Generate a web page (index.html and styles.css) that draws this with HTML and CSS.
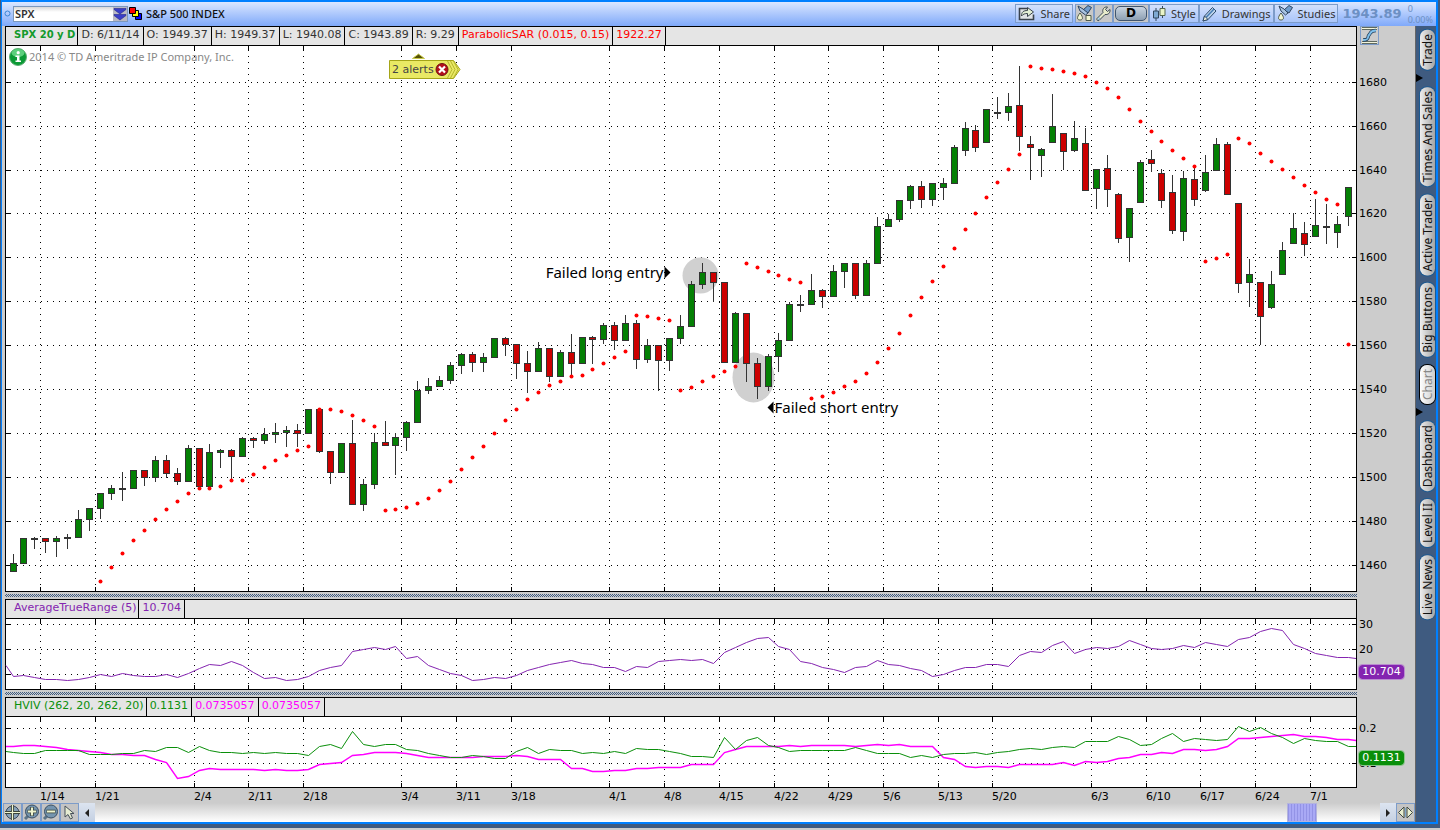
FILE: index.html
```html
<!DOCTYPE html>
<html lang="en">
<head>
<meta charset="utf-8">
<title>S&amp;P 500 INDEX</title>
<link rel="stylesheet" href="styles.css">
</head>
<body>
<div class="window">
  <header class="topbar">
    <svg class="dot" width="7" height="7"><circle cx="3.5" cy="3.5" r="2.5" fill="none" stroke="#3b86d6"/></svg>
    <div class="symbol">
      <input class="symbol-input" type="text" value="SPX" aria-label="Symbol">
      <button class="symbol-drop" aria-label="Symbol list">
        <svg width="14" height="14"><path d="M1 1.5h12v1L7 7 1 2.500zM1 7.500h12v1L7 13 1 8.500z" fill="#3a3fc8" stroke="#23288c" stroke-width=".6"/></svg>
      </button>
    </div>
    <svg class="link-icon" width="14" height="14"><path d="M6.500 6.500h6v6h-6z" fill="#00f" stroke="#000"/><path d="M3.500 3.500h6v6h-6z" fill="#ff0" stroke="#000"/><path d="M.5.5h6v6h-6z" fill="red" stroke="#000"/></svg>
    <h1 class="title">S&amp;P 500 INDEX</h1>
    <nav class="tools">
      <button class="tool share">
        <svg width="18" height="15"><path d="M9 2.500H1.500v11h14v-5" fill="#dfe3e6" stroke="#39424c" stroke-width="1.600"/><path d="M3.500 10c0-4 2-5.500 6-5.500V1.500l6 4.500-6 4.500V7.500C7 7.500 5 8 3.500 10z" fill="#e2efd4" stroke="#39424c"/></svg>
        Share
      </button>
      <button class="tool icon" aria-label="Edit studies">
        <svg width="17" height="17"><path d="M7 5l5-4.500 3.500 2L12 8z" fill="#6f9ccc" stroke="#2f4560"/><path d="M2 1l5 3 5 4-2.500 2L4 6z" fill="#a9c4e0" stroke="#2f4560"/><path d="M4 8c4 5 2.500 7 0 7s-4-2 0-7z" fill="#f2f6d0" stroke="#4f5a4a"/><path d="M10 10.500h5v5h-5z" fill="#f2f6d0" stroke="#4f5a4a"/></svg>
      </button>
      <button class="tool icon" aria-label="Settings">
        <svg width="17" height="17"><path d="M2 13.500L8 7.500C7 4.500 9 1.500 12.500 2L10.500 4.500l2 2 2.500-2c.5 3.500-2 5.500-5 5L4 15.500c-1.500.5-2.500-.5-2-2z" fill="#e9eccb" stroke="#3d4a55"/><circle cx="3.800" cy="13.700" r="1" fill="#fff" stroke="#4b87b6" stroke-width=".7"/></svg>
      </button>
      <button class="tool period"><span>D</span></button>
      <button class="tool style">
        <svg width="15" height="17"><path d="M4 3v13M10.500 1v12" stroke="#31465c"/><path d="M1.500 6h5v7h-5z" fill="#7ea9d3" stroke="#31465c"/><path d="M8 3.500h5v7H8z" fill="#eaf4c8" stroke="#58694f"/></svg>
        Style
      </button>
      <button class="tool drawings">
        <svg width="16" height="16"><path d="M1 15l1.500-5L10.500 1.500l3.500 3.500-8 8.500z" fill="#bcd3ea" stroke="#2d4a69"/><path d="M4 11.500l8-8.500" stroke="#477db5" stroke-width="1.500"/><path d="M1 15l1.500-5 3.500 3.500z" fill="#f4f4df" stroke="#2d4a69"/></svg>
        Drawings
      </button>
      <button class="tool studies">
        <svg width="17" height="17"><path d="M7 5l5-4.500 3.500 2L12 8z" fill="#6f9ccc" stroke="#2f4560"/><path d="M2 1l5 3 4 4-2.500 2L4 6z" fill="#a9c4e0" stroke="#2f4560"/><path d="M4 8c4 5 2.500 7 0 7s-4-2 0-7z" fill="#f2f6d0" stroke="#4f5a4a"/></svg>
        Studies
      </button>
    </nav>
    <strong class="last">1943.89</strong>
    <div class="change"><span>0</span><span>0.00%</span></div>
  </header>

  <div class="workspace">
    <main class="charts">
      <section class="panel main-panel">
        <div class="box">
          <div class="legend">
            <span class="cell name green"><b>SPX 20 y D</b></span><span class="cell">D: 6/11/14</span><span class="cell">O: 1949.37</span><span class="cell">H: 1949.37</span><span class="cell">L: 1940.08</span><span class="cell">C: 1943.89</span><span class="cell">R: 9.29</span><span class="cell red">ParabolicSAR (0.015, 0.15)</span><span class="cell red">1922.27</span>
          </div>
          <div class="plot">
            <svg class="canvas" id="price"></svg>
            <div class="credit">
              <svg width="18" height="18"><circle cx="9" cy="9" r="8.500" fill="#0b9a35" stroke="#5fae74"/><ellipse cx="9" cy="5" rx="6.500" ry="4" fill="#5ccf7c"/><circle cx="9.200" cy="4.700" r="1.600" fill="#fff"/><path d="M6.500 7.500h4v5H12V14H6.500v-1.500H8V9H6.500z" fill="#fff"/></svg>
              2014 © TD Ameritrade IP Company, Inc.
            </div>
            <button class="alerts">
              <svg class="alerts-bg" width="72" height="27"><path d="M23.500 5.500l6-4.500 6 4.500z" fill="#555208" stroke="#c9c94a"/><path d="M.5 7.500h64l6.500 9-6.500 9H.5z" fill="#e9e964" stroke="#a5a518"/><path d="M58.500 8l4.500 8.500-4.500 8.500M61.500 8l4.500 8.500-4.500 8.500M64.500 8l4.500 8.500-4.500 8.500" fill="none" stroke="#b5b52c"/><circle cx="53" cy="16.500" r="6" fill="#b5101c" stroke="#6d1212"/><path d="M50 13.500l6 6M56 13.500l-6 6" stroke="#fff" stroke-width="2.200"/></svg>
              <span class="alerts-text">2 alerts</span>
            </button>
          </div>
        </div>
        <div class="scale">
          <button class="fit" aria-label="Fit scale"><svg width="17" height="17"><path d="M1 1.500h15M1 15.500h15" stroke="#606a60" stroke-width="3"/><path d="M1 1.500h15M1 15.500h15" stroke="#f3f5dc"/><path d="M2 13c7 0 4-3 6-5s1-4.500 7-4.500" fill="none" stroke="#26415c" stroke-width="3.400"/><path d="M2 13c7 0 4-3 6-5s1-4.500 7-4.500" fill="none" stroke="#7fc0ec" stroke-width="1.800"/></svg></button>
          <svg class="ticks" id="price-scale"></svg>
        </div>
      </section>
      <div class="splitter"></div>
      <section class="panel">
        <div class="box">
          <div class="legend"><span class="cell name purple">AverageTrueRange (5)</span><span class="cell purple">10.704</span></div>
          <div class="plot"><svg class="canvas" id="atr"></svg></div>
        </div>
        <div class="scale"><svg class="ticks" id="atr-scale"></svg><output class="badge badge-purple">10.704</output></div>
      </section>
      <div class="splitter"></div>
      <section class="panel">
        <div class="box">
          <div class="legend"><span class="cell name green2">HVIV (262, 20, 262, 20)</span><span class="cell green2">0.1131</span><span class="cell magenta">0.0735057</span><span class="cell magenta">0.0735057</span></div>
          <div class="plot"><svg class="canvas" id="hviv"></svg></div>
        </div>
        <div class="scale"><svg class="ticks" id="hviv-scale"></svg><output class="badge badge-green">0.1131</output></div>
      </section>
      <svg class="dates" id="dates"></svg>
      <footer class="scrollrow">
        <button class="mini" aria-label="Pan"><svg width="17" height="17"><circle cx="8.500" cy="8.500" r="6.500" fill="#86a0b6" stroke="#3a4b5c"/><path d="M8.500 1v15M1 8.500h15" stroke="#3b443b" stroke-width="3"/><path d="M8.500 1v15M1 8.500h15" stroke="#eef5cf" stroke-width="1.200"/></svg></button>
        <button class="mini" aria-label="Zoom in"><svg width="17" height="17"><path d="M2 15l3-3" stroke="#5b7488" stroke-width="3"/><circle cx="9" cy="7.500" r="6.500" fill="#7494ae" stroke="#3a4f63"/><path d="M9 3v9M4.500 7.500h9" stroke="#3b443b" stroke-width="3.600"/><path d="M9 3.500v8M5 7.500h8" stroke="#eef5cf" stroke-width="2"/></svg></button>
        <button class="mini" aria-label="Zoom out"><svg width="17" height="17"><path d="M2 15l3-3" stroke="#5b7488" stroke-width="3"/><circle cx="9" cy="7.500" r="6.500" fill="#7494ae" stroke="#3a4f63"/><path d="M4.500 7.500h9" stroke="#3b443b" stroke-width="3.600"/><path d="M5 7.500h8" stroke="#eef5cf" stroke-width="2"/></svg></button>
        <button class="mini" aria-label="Pointer"><svg width="17" height="17"><path d="M4 2v11l3-2.500L9.500 15l2-1L9.500 9.500H13z" fill="#e6ecd2" stroke="#46505a"/></svg></button>
        <button class="arrow" aria-label="Scroll left"><svg width="6" height="8"><path d="M5 0v8L1 4z" fill="#222"/></svg></button>
        <div class="track"><div class="thumb"></div></div>
        <button class="arrow" aria-label="Scroll right"><svg width="6" height="8"><path d="M1 0v8l4-4z" fill="#222"/></svg></button>
        <button class="mini" aria-label="Expand"><svg width="17" height="17"><path d="M7 3v11L1.500 8.500zM10 3v11l5.500-5.500z" fill="#e9efd0" stroke="#3e4943"/><path d="M8.500 4v9" stroke="#7aa6c9"/></svg></button>
      </footer>
    </main>
    <aside class="tabs">
      <button class="tab">Trade</button>
      <svg class="mark" width="21" height="8"><path d="M0 0l7 4-7 4z"/></svg>
      <button class="tab">Times And Sales</button>
      <button class="tab">Active Trader</button>
      <button class="tab">Big Buttons</button>
      <button class="tab current">Chart</button>
      <svg class="mark" width="21" height="8"><path d="M0 0l7 4-7 4z"/></svg>
      <button class="tab">Dashboard</button>
      <button class="tab">Level II</button>
      <button class="tab">Live News</button>
    </aside>
  </div>
</div>
<script src="chart.js"></script>
</body>
</html>
```

FILE: styles.css
```css
* { box-sizing: border-box; }
body {
  margin: 0;
  background: #ccc;
  font: 11px/14px "DejaVu Sans", Verdana, sans-serif;
  color: #333;
}
button, input { font: inherit; color: inherit; margin: 0; padding: 0; border: 0; background: none; border-radius: 0; }
svg { display: block; flex: none; }

.window {
  display: flex;
  flex-direction: column;
  height: calc(100vh - 2px);
  min-height: 480px;
  border: solid #3f5b80;
  border-width: 0 2px 4px 1px;
  background: #ccc;
}

/* top bar */
.topbar {
  display: flex;
  align-items: center;
  height: 26px;
  padding: 0 3px 1px 2px;
  border: solid #0080ff;
  border-width: 2px 2px 0 1px;
  background: linear-gradient(#dbe7ff, #7fa9fa);
  font-family: "Noto Sans", "Open Sans", sans-serif;
  white-space: nowrap;
}
.symbol {
  display: flex;
  width: 115px;
  height: 16px;
  margin: 0 1px 0 2px;
  border: 1px solid #7b98bd;
  background: #fff;
}
.symbol-input { flex: 1; min-width: 0; padding-left: 1px; font-size: 11px; font-weight: 600; background: linear-gradient(#d8d8d8, #fff 5px); }
.symbol-drop { width: 14px; background: #b9b9c4; }
.title { margin: 0 auto 0 3px; font-size: 11px; font-weight: 500; color: #111; }
.tools { display: flex; }
.tool {
  display: flex;
  align-items: center;
  gap: 4px;
  height: 19px;
  padding: 0 2px;
  border: 1px solid #7d9cc9;
  background: rgba(220, 228, 245, .35);
  font-size: 11px;
}
.share { margin-right: 2px; }
.tool.icon { width: 19px; padding: 0; background: #c8c8c8; }
.period { padding: 0 1px; background: #c8c8c8; }
.period span {
  width: 32px;
  height: 15px;
  border: 1px solid #40556e;
  border-radius: 5px;
  background: linear-gradient(#c8d4e0, #8ea0b3);
  font: bold 12px/13px "DejaVu Sans", sans-serif;
  color: #000;
  text-align: center;
}
.last { margin-left: 4px; font: bold 13px/20px "DejaVu Sans", sans-serif; color: #6c90c4; }
.change { display: flex; flex-direction: column; margin-left: 6px; font-size: 9px; line-height: 11px; color: #6c90c4; }

/* layout */
.workspace { display: flex; flex: 1; min-height: 0; border: solid #0080ff; border-width: 0 2px 2px 1px; }
.charts { display: flex; flex: 1; flex-direction: column; min-width: 0; }
.panel { display: grid; flex: none; grid-template-columns: 1fr 58px; padding-left: 3px; }
.main-panel { flex: 1; min-height: 0; }
.box { display: flex; flex-direction: column; min-width: 0; border: 1px solid #000; }
.legend { display: flex; height: 19px; border-bottom: 1px solid #000; background: #e5e5e5; white-space: nowrap; overflow: hidden; }
.cell { padding: 0 3px; border-right: 1px solid #000; line-height: 15px; }
.cell.name { padding-left: 8px; padding-right: 2px; }
.name b { font-size: 10px; }
.green { color: #129a2c; }
.green2 { color: #0a8f0a; }
.red { color: #f00; }
.purple { color: #8424b0; }
.magenta { color: #f0f; }
.plot { position: relative; height: 70px; background: #fff; }
.main-panel .plot { flex: 1; height: auto; min-height: 0; }
.canvas { position: absolute; inset: 0; width: 100%; height: 100%; overflow: visible; }
.scale { position: relative; display: flex; flex-direction: column; }
.ticks { position: absolute; top: 20px; left: 0; width: 100%; height: calc(100% - 21px); overflow: visible; }
.fit { align-self: flex-start; width: 19px; height: 19px; margin-left: 3px; border: 1px solid #7d9cc9; }
.badge {
  position: absolute;
  left: 2px;
  width: 45px;
  height: 14px;
  border-radius: 3px;
  color: #fff;
  line-height: 14px;
  text-align: center;
}
.badge-purple { top: 66px; background: #8424b0; outline: 1px solid #b98ccf; }
.badge-green { top: 54px; background: #0a8f0a; outline: 1px solid #8cc48c; }
.splitter {
  height: 7px;
  flex: none;
  margin: 0 58px 0 3px;
  background: repeating-conic-gradient(#3f5b80 0 25%, #ccc 0 50%) 0 0 / 2px 2px content-box;
  padding: 2px 0;
}
.dates { width: 100%; height: 15px; }

/* overlays on the price plot */
.credit { position: absolute; top: 2px; left: 3px; display: flex; align-items: center; gap: 2px; color: #888; font-family: "Noto Sans", "Open Sans", sans-serif; white-space: nowrap; }
.alerts { position: absolute; top: 7px; left: 28.370%; width: 72px; height: 27px; }
.alerts-text { position: absolute; top: 10px; left: 3px; color: #444; }

/* chart drawing */
.grid { stroke: #000; stroke-dasharray: 1 5; shape-rendering: crispEdges; }
.tick { stroke: #000; shape-rendering: crispEdges; }
.wick { stroke: #333; shape-rendering: crispEdges; }
.body { stroke: #333; shape-rendering: crispEdges; }
.up { fill: #048004; }
.down { fill: #c00; }
.sar { fill: #f00; }
.halo { fill: #d0d0d0; }
.line { fill: none; }
.line-atr { stroke: #8424b0; }
.line-hv { stroke: #0a8f0a; }
.line-iv { stroke: #f0f; stroke-width: 1.400; }
.axis { fill: #000; font: 11px "DejaVu Sans", sans-serif; }
.note { fill: #000; font: 15px "Noto Sans", "Open Sans", sans-serif; }

/* bottom row */
.scrollrow { display: flex; height: 19px; flex: none; padding-left: 1px; }
.mini { flex: none; width: 19px; height: 19px; border: 1px solid #7d9cc9; background: #c4c4c4; }
.arrow { display: grid; flex: none; place-items: center; width: 16px; background: linear-gradient(#dce4f0, #c4d0e2); }
.track { display: flex; flex: 1; min-width: 0; background: linear-gradient(#ccc, #fff); }
.thumb { width: 30px; flex: none; margin-left: 92.800%; border: 1px solid #b4b4dc; background: repeating-linear-gradient(90deg, #9393e6 0 1px, #a9a9f5 1px 3px); }

/* side tabs */
.tabs {
  display: flex;
  flex-direction: column;
  flex: none;
  width: 21px;
  padding-top: 4px;
  gap: 8px;
  border-left: 1px solid #666;
  background: #3f5b80;
}
.tab {
  width: 15px;
  margin-left: 4px;
  padding: 4px 0;
  border-radius: 7px;
  background: linear-gradient(270deg, #eee, #a4a4a4);
  box-shadow: 0 0 0 1px #1b5a92;
  color: #111;
  font: 12px/15px "Noto Sans", "Open Sans", sans-serif;
  writing-mode: vertical-rl;
  transform: rotate(180deg);
  white-space: nowrap;
}
.tab.current { background: linear-gradient(270deg, #fff, #ccc); box-shadow: 0 0 0 1px #000; color: #888; }
.mark { margin: -4px 0 -3px; }
```

FILE: chart.js
```js
// Candles: direction, body top, body bottom, high, low (panel rows; 46 is the top row)
const candles = `
g563 572 554 572|g538 564 538 564|g538 540 537 549|r538 542 538 553|g538 542 536 557|g537 539 534 549|g519 538 510 538|g508 520 508 531|g493 509 493 519|g488 494 485 500
g488 490 472 501|g470 489 470 489|r470 478 470 486|g460 478 456 482|r460 474 455 478|r473 482 468 485|g448 482 445 482|r448 487 448 487|g452 487 444 487|g450 453 449 468
r450 457 449 479|g438 457 437 457|r438 441 437 448|g434 441 428 444|g432 435 423 443|g430 433 426 447|r430 434 424 447|g409 434 409 434|r409 452 409 453|r451 473 451 484
g443 473 443 473|r443 505 420 505|g484 505 479 511|g442 485 433 489|r442 446 421 446|g437 446 433 475|g422 438 421 451|g390 423 381 423|g386 391 378 394|g380 387 376 387
g365 381 362 384|g354 366 353 374|r354 363 352 372|g357 363 353 372|g338 358 338 358|r338 345 337 356|r344 364 344 379|r363 372 351 393|g348 372 342 372|r348 377 348 382
g352 377 350 377|r352 364 334 375|g337 364 337 364|r337 340 336 364|g325 340 323 344|r325 341 322 350|g323 341 315 341|r323 360 320 369|g345 360 339 363|r345 361 345 391
g338 361 338 371|g326 339 315 344|g284 327 281 327|g272 285 263 289|r272 283 272 302|r282 363 282 363|g313 363 312 363|r313 364 313 382|r363 387 358 399|g356 387 354 391
g340 357 333 372|g304 341 302 341|g304 306 295 312|g290 305 274 305|r290 297 289 308|g271 297 265 297|g263 272 263 288|r263 296 263 299|g263 296 260 296|g226 264 217 264
g219 227 214 227|g200 220 200 222|g186 201 185 209|r186 200 181 208|g183 200 183 206|g183 188 178 200|g147 184 145 184|g128 151 122 156|r130 148 125 152|g109 143 109 143
g112 114 97 119|g106 113 93 121|r105 137 66 151|r144 148 136 180|g149 156 148 177|g126 143 94 143|r133 152 133 170|g138 151 121 152|r143 191 128 191|g169 189 169 209
r168 190 155 207|r194 239 193 243|g208 238 208 262|g162 203 160 203|r159 164 150 172|r173 201 169 208|r192 231 175 234|g178 232 171 241|r179 200 166 206|g172 191 155 192
g144 171 138 171|r144 195 142 195|r203 284 203 293|g274 283 259 307|r282 317 282 345|g284 308 271 309|g250 275 242 275|g228 244 213 244|r233 245 222 256|g225 237 199 237
g226 228 204 244|g224 233 216 248|g187 217 187 226`.trim().split(/[|\n]/).map(s => [s[0], ...s.slice(1).split(' ').map(Number)]);

// Parabolic SAR, from the ninth candle on
const sar = [581,567,553,540,530,519,509,501,493,488,488,486,480,480,474,467,460,455,450,446,409,409,411,415,420,426,510,509,507,503,498,490,481,469,457,446,433,420,409,399,392,385,381,376,375,369,363,357,351,315,316,318,320,390,387,381,376,371,366,263,267,271,275,279,282,398,396,392,386,381,373,362,348,333,315,297,281,266,248,229,213,197,182,169,154,66,68,69,71,73,76,82,88,97,109,121,131,141,150,158,166,261,258,254,138,143,153,161,169,177,185,192,199,204,344];

// Study lines: left edge, one value per candle, right edge
const atr = [665,676,675,677,679,679,680,679,677,674,676,673,675,676,676,674,677,673,668,664,665,661,665,672,678,677,680,679,676,670,667,665,651,649,647,649,646,658,656,665,669,673,675,680,679,677,678,675,670,667,664,662,660,663,664,667,667,671,666,667,661,660,659,660,659,663,652,647,642,638,637,646,649,661,663,667,669,672,667,666,660,664,665,668,670,676,674,670,667,667,664,664,666,655,651,652,645,641,653,649,647,648,646,640,644,648,649,648,645,647,642,644,646,639,637,631,628,630,644,648,653,655,657,657,658];
const hv = [751,752,753,753,750,750,750,750,754,754,754,753,753,750,751,747,747,752,746,750,752,752,753,752,753,752,753,753,755,746,744,748,731,744,746,744,744,749,750,753,755,757,757,755,756,758,758,751,747,753,749,750,750,753,752,753,751,753,748,749,749,751,753,756,756,757,737,749,740,737,745,747,751,750,750,750,750,750,747,750,753,753,753,757,755,757,754,753,753,752,754,752,751,749,748,749,747,746,747,741,741,741,736,739,745,744,738,733,741,738,739,740,739,726,731,727,733,737,743,738,740,741,741,746,746];
const iv = [746,746,745,745,746,747,749,750,751,752,754,754,755,755,759,762,778,776,770,768,769,769,769,769,770,769,770,770,769,764,763,762,755,754,752,752,752,753,755,757,757,757,757,757,756,756,756,755,756,759,759,759,768,768,771,771,770,770,768,768,767,767,767,764,764,764,752,749,746,746,746,746,745,746,745,745,745,745,746,745,744,745,744,746,746,746,757,759,766,767,766,766,767,764,764,764,764,762,765,761,762,761,758,757,754,754,752,753,749,749,750,749,746,738,738,737,736,735,734,736,736,737,739,739,740];

const weeks = [[2.5,'1/14'],[7.5,'1/21'],[16.5,'2/4'],[21.5,'2/11'],[26.5,'2/18'],[35.5,'3/4'],[40.5,'3/11'],[45.5,'3/18'],[54.5,'4/1'],[59.5,'4/8'],[64.5,'4/15'],[69.5,'4/22'],[74.5,'4/29'],[79.5,'5/6'],[84.5,'5/13'],[89.5,'5/20'],[98.5,'6/3'],[103.5,'6/10'],[108.5,'6/17'],[113.5,'6/24'],[118.5,'7/1']];

const byId = id => document.getElementById(id);
const line = (c, x1, y1, x2, y2) => `<line class="${c}" x1="${x1}" y1="${y1}" x2="${x2}" y2="${y2}"/>`;

function drawPanel(id, top, rows, levels, content) {
  const svg = byId(id);
  const W = svg.clientWidth, H = svg.clientHeight;
  const step = (W - 15) / 122;
  const x = n => 7 + Math.floor(n * step) + .5;
  const y = v => Math.round((v - top) * H / rows) + .5;
  let grid = '', labels = '';
  for (const [n] of weeks) {
    const gx = Math.round(7 + n * step) + .5;
    grid += line('grid', gx, 4, gx, H - 5) + line('tick', gx, 0, gx, 5) + line('tick', gx, H - 4, gx, H);
  }
  for (const [v, text] of levels) {
    grid += line('grid', 11, y(v), W - 6, y(v)) + line('tick', 0, y(v), 5, y(v)) + line('tick', W - 4, y(v), W + 1, y(v));
    if (text) labels += `<text class="axis" x="2" y="${y(v) + 3.5}">${text}</text>`;
  }
  svg.innerHTML = content(x, y, W, grid);
  byId(id + '-scale').innerHTML = labels;
}

function path(cls, data, x, y, W) {
  const pts = data.map((v, i) => `${i === 0 ? 0 : i === data.length - 1 ? W : x(i - 1)},${y(v)}`);
  return `<polyline class="line ${cls}" points="${pts.join(' ')}"/>`;
}

function draw() {
  const levels = [82,126,170,213,257,301,345,389,433,477,521,565].map((v, i) => [v, 1680 - 20 * i]);
  drawPanel('price', 46, 545, levels, (x, y, W, grid) => {
    let s = grid;
    s += `<ellipse class="halo" cx="${x(62.8)}" cy="${y(275)}" rx="18" ry="18"/><ellipse class="halo" cx="${x(67.7)}" cy="${y(377)}" rx="21" ry="25"/>`;
    candles.forEach(([dir, a, b, hi, lo], n) => {
      const cx = x(n), t = y(a), h = Math.max(y(b) - t - 1, 1);
      s += line('wick', cx, y(hi) - .5, cx, y(lo) - .5);
      s += `<rect class="body ${dir === 'g' ? 'up' : 'down'}" x="${cx - 3}" y="${t}" width="6" height="${h}"/>`;
    });
    sar.forEach((v, i) => { s += `<circle class="sar" cx="${x(i + 8)}" cy="${y(v)}" r="2"/>`; });
    const lx = x(59.5), ly = y(272), rx = x(69), ry = y(407);
    s += `<path d="M${lx} ${ly - 6}v12l6-6z"/><text class="note" text-anchor="end" x="${lx - 1}" y="${ly + 5}">Failed long entry</text>`;
    s += `<path d="M${rx + 5} ${ry - 6}v12l-6-6z"/><text class="note" x="${rx + 6}" y="${ry + 5}">Failed short entry</text>`;
    return s;
  });
  drawPanel('atr', 619, 70, [[624, '30'], [649, '20'], [674, '']], (x, y, W, grid) => grid + path('line-atr', atr, x, y, W));
  drawPanel('hviv', 717, 70, [[728, '0.2'], [763, '0.1']], (x, y, W, grid) => grid + path('line-iv', iv, x, y, W) + path('line-hv', hv, x, y, W));
  const step = (byId('price').clientWidth - 15) / 122;
  byId('dates').innerHTML = weeks.map(([n, t]) => `<text class="axis" x="${Math.round(11 + n * step)}" y="12">${t}</text>`).join('');
}

draw();
window.addEventListener('resize', draw);
```
